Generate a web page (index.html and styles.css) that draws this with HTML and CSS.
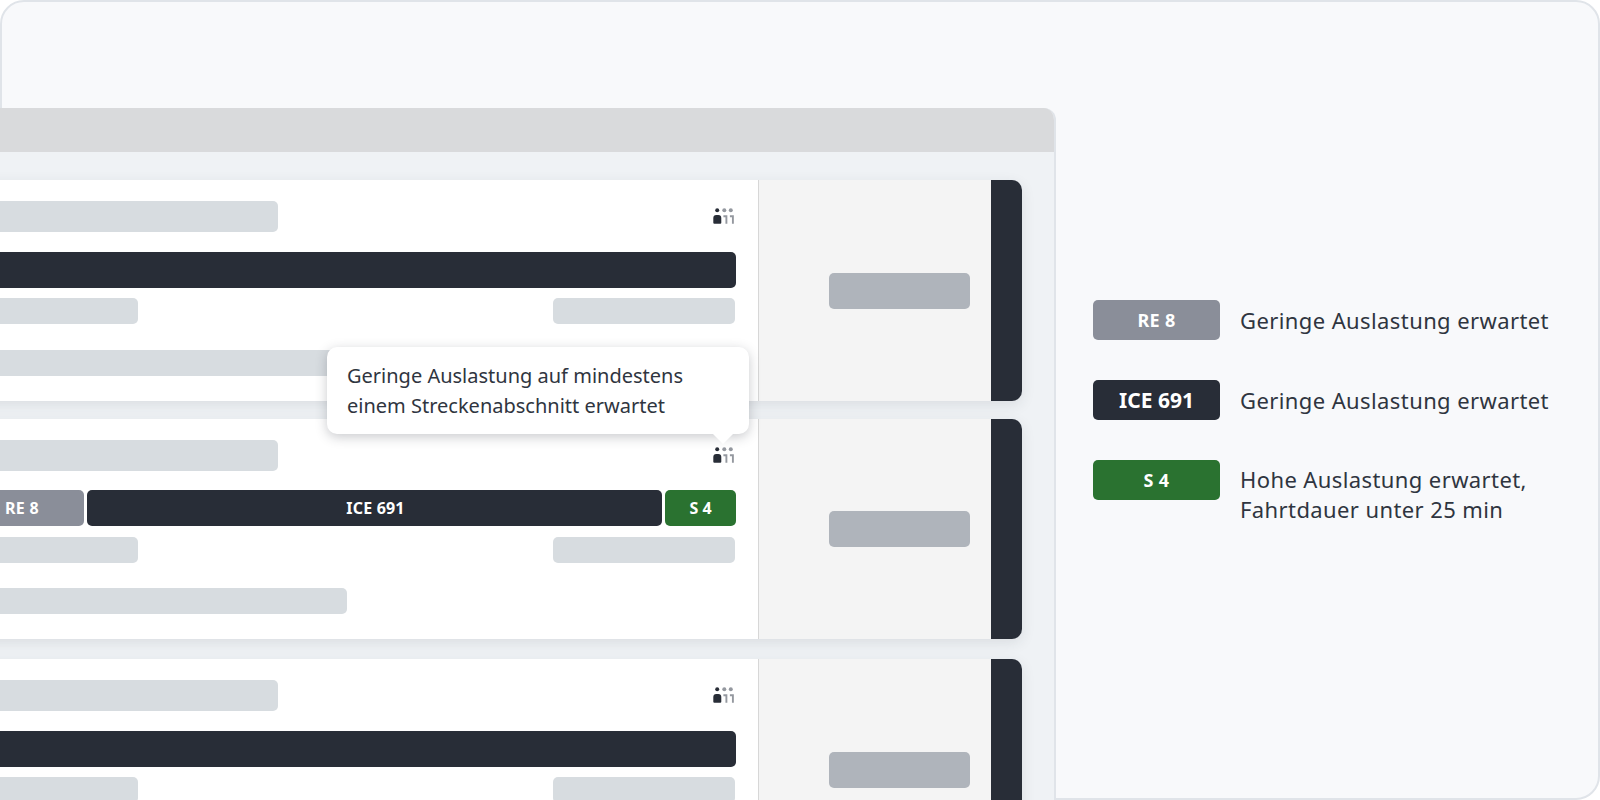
FILE: index.html
```html
<!DOCTYPE html>
<html lang="de">
	<head>
		<meta charset="UTF-8">
		<title>Auslastung</title>
		<link rel="stylesheet" href="styles.css">
	</head>
	<body>
		<svg class="defs" width="0" height="0" aria-hidden="true">
			<symbol id="people" viewBox="0 0 24 18">
				<circle cx="5.2" cy="3.3" r="2" fill="#282d37"/>
				<circle cx="12.3" cy="3.3" r="2" fill="#94989f"/>
				<circle cx="18.8" cy="3.3" r="2" fill="#94989f"/>
				<path d="M1.3 11q0-3 3-3h2q3 0 3 3v4.7q0 1-1 1h-6q-1 0-1-1z" fill="#282d37"/>
				<path d="M11.4 9.2h3v7.5M17.9 9.2h3v7.5" fill="none" stroke="#94989f" stroke-width="1.9"/>
			</symbol>
		</svg>
		<div class="frame">
			<div class="window">
				<div class="titlebar"></div>
				<div class="cards">
					<div class="card">
						<div class="main">
							<div class="head">
								<div class="sk sk-title"></div>
								<svg class="people"><use href="#people"/></svg>
							</div>
							<div class="bars">
								<div class="bar dark"></div>
							</div>
							<div class="times">
								<div class="sk sk-left"></div>
								<div class="sk sk-right"></div>
							</div>
							<div class="sk sk-foot"></div>
						</div>
						<div class="side"><div class="price"></div></div>
						<div class="stripe"></div>
					</div>

					<div class="card card-mid">
						<div class="main">
							<div class="head">
								<div class="sk sk-title"></div>
								<svg class="people"><use href="#people"/></svg>
								<div class="tooltip">Geringe Auslastung auf mindestens<br>einem Streckenabschnitt erwartet</div>
							</div>
							<div class="bars">
								<div class="bar grey re">RE 8</div>
								<div class="bar dark ice">ICE 691</div>
								<div class="bar green s">S 4</div>
							</div>
							<div class="times">
								<div class="sk sk-left"></div>
								<div class="sk sk-right"></div>
							</div>
							<div class="sk sk-foot"></div>
						</div>
						<div class="side"><div class="price"></div></div>
						<div class="stripe"></div>
					</div>

					<div class="card">
						<div class="main">
							<div class="head">
								<div class="sk sk-title"></div>
								<svg class="people"><use href="#people"/></svg>
							</div>
							<div class="bars">
								<div class="bar dark"></div>
							</div>
							<div class="times">
								<div class="sk sk-left"></div>
								<div class="sk sk-right"></div>
							</div>
							<div class="sk sk-foot"></div>
						</div>
						<div class="side"><div class="price"></div></div>
						<div class="stripe"></div>
					</div>
				</div>
			</div>

			<div class="legend">
				<div class="row">
					<div class="pill grey small">RE 8</div>
					<div class="label">Geringe Auslastung erwartet</div>
				</div>
				<div class="row">
					<div class="pill dark">ICE 691</div>
					<div class="label">Geringe Auslastung erwartet</div>
				</div>
				<div class="row">
					<div class="pill green small">S 4</div>
					<div class="label wrap">Hohe Auslastung erwartet,<br>Fahrtdauer unter 25 min</div>
				</div>
			</div>
		</div>
	</body>
</html>
```

FILE: styles.css
```css
* {
	margin: 0;
	padding: 0;
	box-sizing: border-box;
}

html,
body {
	height: 800px;
	overflow: hidden;
	background: #fff;
}

body {
	font-family: "Noto Sans", "Liberation Sans", sans-serif;
	color: #282d37;
}

.defs {
	display: block;
}

.frame {
	display: flex;
	align-items: flex-start;
	height: 800px;
	padding-top: 106px;
	background: #f8f9fb;
	border: 2px solid #e0e4e9;
	border-radius: 24px;
}

.window {
	flex: none;
	width: 1120px;
	height: 692px;
	margin-left: -66px;
	overflow: hidden;
	background: #eff2f5;
	border-right: 2px solid #e0e4e9;
	border-top-right-radius: 12px;
}

.titlebar {
	height: 44px;
	background: #d9dadc;
}

.cards {
	display: flex;
	flex-direction: column;
	gap: 18px;
	padding: 28px 32px 0 0;
}

.card {
	display: flex;
	flex: none;
	height: 221px;
	border-radius: 0 10px 10px 0;
	box-shadow: 0 4px 14px rgba(40, 45, 55, 0.1);
}

.card-mid {
	height: 220px;
	margin-bottom: 2px;
}

.main {
	flex: 1;
	padding: 20px 22px 0 24px;
	background: #fff;
}

.head {
	position: relative;
	display: flex;
	justify-content: space-between;
	align-items: center;
	height: 32px;
}

.sk {
	height: 26px;
	background: #d7dce0;
	border-radius: 5px;
}

.sk-title {
	width: 318px;
	height: 31px;
}

.sk-left {
	width: 178px;
}

.sk-right {
	width: 182px;
	margin-right: 1px;
}

.sk-foot {
	width: 387px;
	margin-top: 26px;
}

.people {
	width: 24px;
	height: 18px;
}

.bars {
	display: flex;
	gap: 3px;
	margin-top: 20px;
}

.bar {
	flex: 1;
	height: 36px;
	border-radius: 5px;
	color: #fff;
	font-size: 16px;
	font-weight: 700;
	line-height: 36px;
	text-align: center;
}

.bar.re {
	flex: none;
	width: 124px;
	letter-spacing: 0.3px;
}

.bar.ice {
	letter-spacing: 0.2px;
	padding-left: 2px;
}

.bar.s {
	flex: none;
	width: 71px;
}

.card-mid .bars {
	margin-top: 19px;
}

.card-mid .times {
	margin-top: 11px;
}

.card-mid .sk-foot {
	margin-top: 25px;
}

.grey {
	background: #8a8e99;
}

.dark {
	background: #282d37;
}

.green {
	background: #2a7230;
}

.times {
	display: flex;
	justify-content: space-between;
	margin-top: 10px;
}

.side {
	display: flex;
	flex: none;
	justify-content: flex-end;
	align-items: center;
	width: 233px;
	padding-right: 21px;
	background: #f4f4f4;
	border-left: 1px solid #d7d7d7;
}

.price {
	width: 141px;
	height: 36px;
	background: #afb4bb;
	border-radius: 5px;
}

.stripe {
	flex: none;
	width: 31px;
	background: #282d37;
	border-radius: 0 10px 10px 0;
}

.tooltip {
	position: absolute;
	right: -13px;
	bottom: 37px;
	width: 422px;
	height: 87px;
	padding: 14px 20px;
	background: #fff;
	border-radius: 10px;
	box-shadow: 0 3px 12px rgba(40, 45, 55, 0.25);
	color: #2f3540;
	font-size: 20px;
	line-height: 30px;
}

.tooltip::after {
	content: "";
	position: absolute;
	right: 16px;
	bottom: -10px;
	border-top: 10px solid #fff;
	border-left: 10px solid transparent;
	border-right: 10px solid transparent;
}

.legend {
	display: flex;
	flex-direction: column;
	gap: 40px;
	margin-left: 37px;
	padding-top: 192px;
}

.row {
	display: flex;
	gap: 20px;
}

.pill {
	flex: none;
	width: 127px;
	height: 40px;
	border-radius: 5px;
	color: #fff;
	font-size: 21px;
	font-weight: 700;
	line-height: 40px;
	text-align: center;
}

.pill.small {
	font-size: 18px;
	letter-spacing: 0.3px;
}

.label {
	padding-top: 5px;
	color: #2f3540;
	font-size: 22px;
	letter-spacing: 0.4px;
	line-height: 30px;
}

.label.wrap {
	padding-top: 4px;
}
```
